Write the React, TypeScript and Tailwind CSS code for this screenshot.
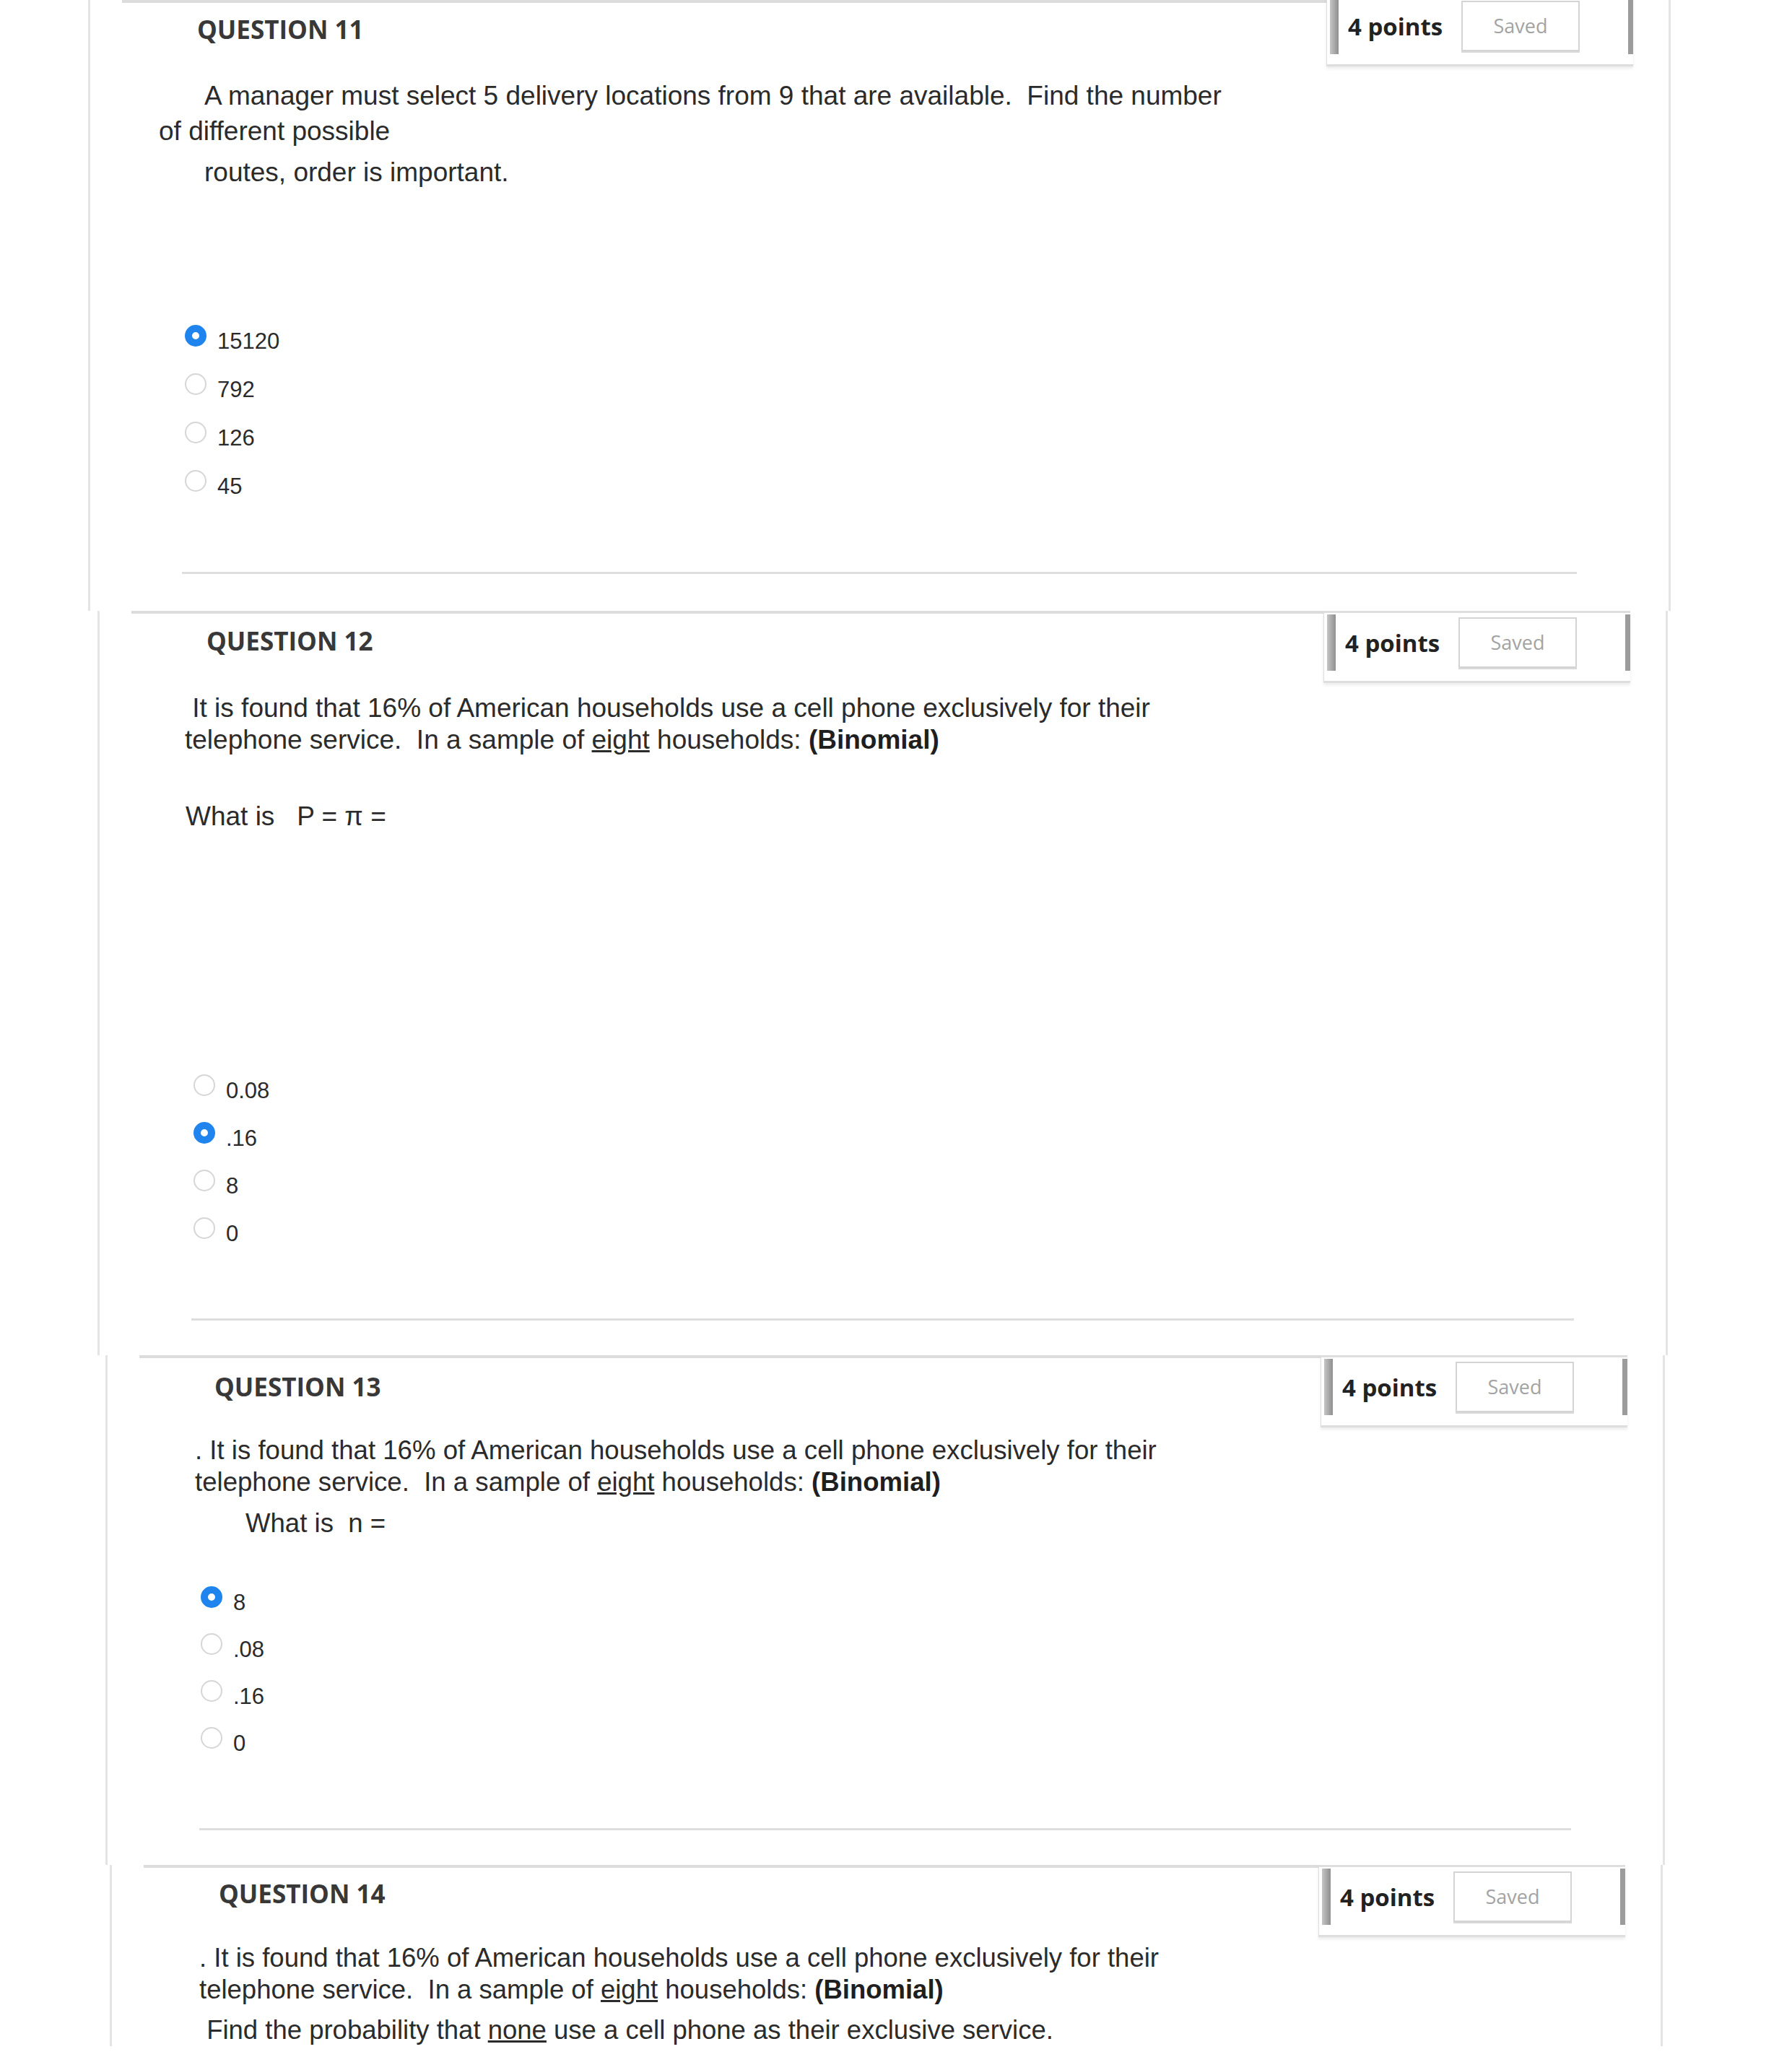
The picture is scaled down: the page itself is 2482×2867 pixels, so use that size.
import React from 'react';

const body = "font-['Liberation_Sans',Arial,sans-serif] text-[#2b2b2b]";
const open = "font-['Open_Sans',sans-serif]";

function PointsBox({ className = '' }: { className?: string }) {
  return (
    <div className={`w-[425px] h-[100px] mr-[49px] shrink-0 border-t-[3px] border-b-[3px] border-l border-[#dedede] shadow-[0_3px_4px_rgba(0,0,0,0.08)] ${className}`}>
      <div className="flex items-center h-[78px] mt-[2px]">
        <div className="ml-[4px] w-[12px] h-full bg-linear-to-r from-[#c6c6c6] to-[#8f8f8f]" />
        <span className={`ml-[13px] w-[157px] ${open} font-bold text-[33px] leading-none text-[#222]`}>4 points</span>
        <div className="w-[164px] h-[70px] border-2 border-[#d4d4d4] shadow-[0_2px_0_#d9d9d9] flex items-center justify-center">
          <span className={`${open} text-[27px] text-[#a3a3a3]`}>Saved</span>
        </div>
        <div className="ml-auto w-[7px] h-full bg-[#9c9c9c]" />
      </div>
    </div>
  );
}

function Header({ n, labelPad, boxClass }: { n: number; labelPad: string; boxClass?: string }) {
  return (
    <div className="flex items-start">
      <div className={`flex-1 ml-[44px] border-t-4 border-[#dcdcdc] pl-[104px] ${labelPad}`}>
        <h2 className={`${open} font-bold text-[35px] leading-[48px] text-[#383838]`}>QUESTION {n}</h2>
      </div>
      <PointsBox className={boxClass} />
    </div>
  );
}

function Option({ label, checked, rowH }: { label: string; checked?: boolean; rowH: string }) {
  return (
    <div className={`flex items-center ${rowH}`}>
      <span
        className={`w-[30px] h-[30px] rounded-full mb-[16px] shrink-0 bg-white ${
          checked ? 'border-[10px] border-[#1f84ee]' : 'border-[2.5px] border-[#d6d6d6]'
        }`}
      />
      <span className={`ml-[15px] ${body} text-[31px] leading-[36px]`}>{label}</span>
    </div>
  );
}

function Rule({ className }: { className: string }) {
  return <div className={`mx-[127px] h-[3px] bg-[#dedede] ${className}`} />;
}

export default function App() {
  return (
    <div className="bg-white w-[2482px] min-h-[2867px]">
      {/* question 11 */}
      <section className="ml-[122px] mr-[168px] border-x-[3px] border-[#e4e4e4] pb-[51px]">
        <Header n={11} labelPad="pt-[13px]" boxClass="-mt-[8px]" />
        <div className={`mt-[16px] ml-[95px] ${body} text-[37px] leading-[49px]`}>
          <p className="indent-[63px]">
            A manager must select 5 delivery locations from 9 that are available.&nbsp; Find the number
            <br />
            of different possible
          </p>
          <p className="mt-[8px] pl-[63px]">routes, order is important.</p>
        </div>
        <div className="mt-[176px] ml-[131px]">
          <Option label="15120" checked rowH="h-[67px]" />
          <Option label="792" rowH="h-[67px]" />
          <Option label="126" rowH="h-[67px]" />
          <Option label="45" rowH="h-[67px]" />
        </div>
        <Rule className="mt-[85px]" />
      </section>

      {/* question 12 */}
      <section className="ml-[135px] mr-[172px] border-x-[3px] border-[#e4e4e4] pb-[48px]">
        <Header n={12} labelPad="pt-[14px]" />
        <div className={`mt-[13px] ml-[118px] ${body} text-[37px] leading-[44px]`}>
          <p>
            &nbsp;It is found that 16% of American households use a cell phone exclusively for their
            <br />
            telephone service.&nbsp; In a sample of <u>eight</u> households: <b className="text-[#1f1f1f]">(Binomial)</b>
          </p>
          <p className="mt-[62px] pl-[1px]">What is&nbsp;&nbsp; P = π =</p>
        </div>
        <div className="mt-[325px] ml-[130px]">
          <Option label="0.08" rowH="h-[66px]" />
          <Option label=".16" checked rowH="h-[66px]" />
          <Option label="8" rowH="h-[66px]" />
          <Option label="0" rowH="h-[66px]" />
        </div>
        <Rule className="mt-[84px]" />
      </section>

      {/* question 13 */}
      <section className="ml-[146px] mr-[176px] border-x-[3px] border-[#e4e4e4] pb-[48px]">
        <Header n={13} labelPad="pt-[16px]" />
        <div className={`mt-[10px] ml-[121px] ${body} text-[36.6px] leading-[44px]`}>
          <p>
            . It is found that 16% of American households use a cell phone exclusively for their
            <br />
            telephone service.&nbsp; In a sample of <u>eight</u> households: <b className="text-[#1f1f1f]">(Binomial)</b>
          </p>
          <p className="mt-[13px] pl-[70px]">What is&nbsp; n =</p>
        </div>
        <div className="mt-[55px] ml-[129px]">
          <Option label="8" checked rowH="h-[65px]" />
          <Option label=".08" rowH="h-[65px]" />
          <Option label=".16" rowH="h-[65px]" />
          <Option label="0" rowH="h-[65px]" />
        </div>
        <Rule className="mt-[85px]" />
      </section>

      {/* question 14 */}
      <section className="ml-[152px] mr-[179px] border-x-[3px] border-[#e4e4e4]">
        <Header n={14} labelPad="pt-[12px]" />
        <div className={`mt-[7px] ml-[121px] ${body} text-[36.5px] leading-[44px]`}>
          <p>
            . It is found that 16% of American households use a cell phone exclusively for their
            <br />
            telephone service.&nbsp; In a sample of <u>eight</u> households: <b className="text-[#1f1f1f]">(Binomial)</b>
          </p>
          <p className="mt-[12px]">
            &nbsp;Find the probability that <u>none</u> use a cell phone as their exclusive service.
          </p>
        </div>
      </section>
    </div>
  );
}
